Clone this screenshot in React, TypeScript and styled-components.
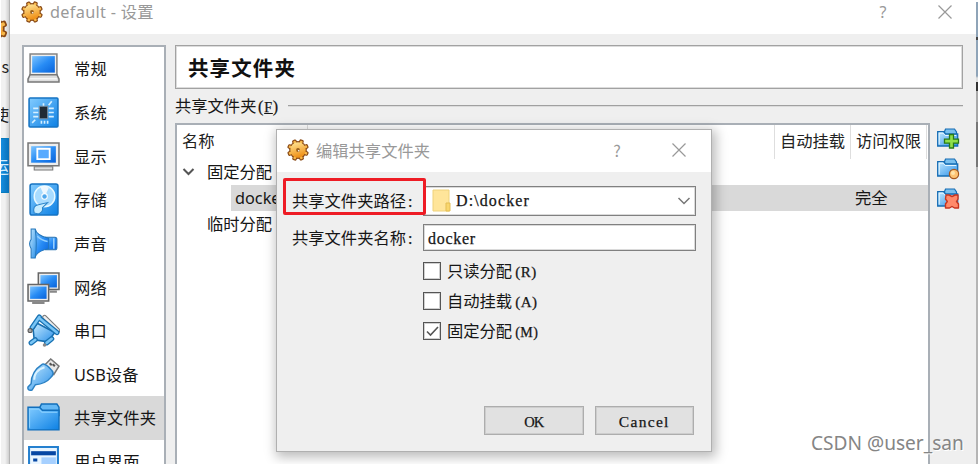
import React from 'react';
import styled, { createGlobalStyle } from 'styled-components';

const Global = createGlobalStyle`
  * { box-sizing: border-box; }
  body { margin: 0; overflow: hidden; background: #fff; }
  svg { flex: none; }
`;
const ui = `'Noto Sans', 'Noto Sans CJK SC', sans-serif`;
const cjk = `'Noto Sans CJK SC', sans-serif`;

const Screen = styled.div`
  position: relative; display: flex; width: 978px; height: 464px; overflow: hidden;
  font: 16.3px/24px ${ui}; color: #161616; white-space: nowrap;
`;
const BackWindow = styled.div`
  width: 9px; height: 464px; flex: none; overflow: hidden; padding-top: 2px;
  background: linear-gradient(90deg, #f1f1f1 50%, #cfcfcf); border-left: 1px solid #fff;
  display: flex; flex-direction: column; font-family: ${cjk};
`;
const BackCut = styled.div<{ h: number; blue?: boolean }>`
  height: ${p => p.h}px; flex: none; overflow: hidden; display: flex; align-items: center;
  justify-content: flex-end;
  color: ${p => (p.blue ? '#d9efff' : '#222')};
  background: ${p => (p.blue ? 'linear-gradient(90deg,#168ee0,#0870b8)' : 'transparent')};
  border: solid #087bbd; border-width: ${p => (p.blue ? '1px 0' : '0')};
`;
const Window = styled.div`
  width: 967px; height: 464px; flex: none; display: flex; flex-direction: column;
  background: #efefef; border-left: 1px solid #b4b4b4;
`;
const TitleBar = styled.div`
  height: 34px; flex: none; background: #fff; display: flex; align-items: center;
  padding: 0 23px 10px 10px; color: #999;
`;
const TitleText = styled.div<{ space?: number }>`
  flex: 1; margin-left: 6px; color: #999; letter-spacing: ${p => p.space ?? 0}px;
`;
const HelpMark = styled.div`
  width: 10px; text-align: center; margin-right: 49px; font-size: 16px; color: #999;
`;
const Body = styled.div`flex: 1; min-height: 0; display: flex; padding: 11px 0 0 12px;`;
const Sidebar = styled.div`
  width: 144px; height: 440px; flex: none; background: #fff;
  border: 2px solid #a9afb6; border-width: 2px 2px 0 2px;
`;
const NavItem = styled.div<{ active?: boolean }>`
  height: 43.65px; display: flex; align-items: center; padding-left: 3px; gap: 14px;
  background: ${p => (p.active ? '#d9d9d9' : 'transparent')};
`;
const NavLabel = styled.span`padding-top: 1px; letter-spacing: .15px;`;
const Content = styled.div`width: 788px; margin-left: 9px; flex: none; display: flex; flex-direction: column;`;
const Heading = styled.div`
  height: 44px; flex: none; border: 1px solid #a2a2a2; box-shadow: inset 0 0 0 1px #dcdcdc;
  background: #fff; padding-left: 12px;
  font: 700 20.5px/43px ${cjk}; letter-spacing: 1.1px; color: #111;
`;
const GroupTitle = styled.div`
  height: 34px; flex: none; display: flex; align-items: center; font-family: ${cjk}; gap: 9px; padding-top: 1px;
  &::after { content: ''; flex: 1; height: 1px; margin-bottom: 3px; background: #a0a0a0; box-shadow: 0 1px #dcdcdc; }
`;
const Latin = styled.span<{ space?: number; size?: number; lead?: number; underline?: boolean }>`
  font-family: 'Liberation Serif', serif; font-size: ${p => p.size ?? 16}px; letter-spacing: ${p => p.space ?? 0.9}px;
  margin-left: ${p => p.lead ?? 0}px;
  text-decoration: ${p => (p.underline ? 'underline' : 'none')}; -webkit-text-stroke: 0.25px;
`;
const TreeArea = styled.div`display: flex; height: 350px; flex: none;`;
const Tree = styled.div`width: 755px; height: 350px; background: #fff; border: 2px solid #a9afb6;`;
const TreeHead = styled.div`
  display: grid; grid-template-columns: 131px 467px 76px 76px; height: 34px; align-items: stretch;
`;
const HeadCell = styled.div`
  border-right: 1px solid #dedede; padding-left: 5px; line-height: 33px; color: #222;
`;
const TreeRow = styled.div<{ h: number; pad: number }>`
  height: ${p => p.h}px; display: flex; align-items: center; padding-left: ${p => p.pad}px;
`;
const SelectedRow = styled.div`
  height: 26px; margin-left: 54px; padding-left: 4px; background: #d9d9d9; display: grid;
  grid-template-columns: 620px 1fr; align-items: center;
`;
const Tools = styled.div`display: flex; flex-direction: column; gap: 6px; padding: 4px 0 0 6px;`;

const Dialog = styled.div`
  position: absolute; left: 276px; top: 129px; width: 436px; height: 323px;
  background: #efefef; border: 1px solid #b0b0b0; display: flex; flex-direction: column;
  box-shadow: 2px 3px 11px 2px rgba(0,0,0,.27); font-family: ${cjk};
`;
const DialogTitle = styled.div`
  height: 42px; flex: none; background: #fff; display: flex; align-items: center; padding: 0 24px 3px 9px;
`;
const Form = styled.div`padding: 14px 15px 0 15px; display: flex; flex-direction: column;`;
const Field = styled.div<{ h: number; gap: number }>`
  display: grid; grid-template-columns: 131px 273px; height: ${p => p.h}px; margin-bottom: ${p => p.gap}px;
  align-items: center;
`;
const Combo = styled.div`
  height: 30px; background: #fff; border: 1px solid #808080; box-shadow: inset 0 0 0 1px #dadada;
  display: flex; align-items: center; padding: 0 4px 0 8px; gap: 5px;
`;
const ComboText = styled.div`flex: 1; display: flex; align-items: center;`;
const Input = styled.div`
  height: 27px; background: #fff; border: 1px solid #808080; box-shadow: inset 0 0 0 1px #dadada;
  padding-left: 4px; line-height: 25px;
`;
const CheckRow = styled.div`
  height: 30px; padding-left: 131px; display: flex; align-items: center; gap: 6px;
`;
const CheckBox = styled.div`
  width: 18px; height: 18px; border: 1px solid #555; box-shadow: inset 0 0 0 1px #d0d0d0; background: #fff;
  display: flex; align-items: center; justify-content: center;
`;
const Buttons = styled.div`margin-top: auto; padding: 0 17px 16px 0; display: flex; justify-content: flex-end; gap: 11px;`;
const Button = styled.div`
  width: 99.5px; height: 29px; background: #e1e1e1; border: 1px solid #adadad;
  box-shadow: inset 0 0 0 1px #cdcdcd; text-align: center; line-height: 26px;
`;
const Highlight = styled.div`
  position: absolute; left: 283px; top: 178px; width: 143px; height: 37px; border: 3.5px solid #ee1c25; border-radius: 2px;
`;
const Watermark = styled.div`
  position: absolute; left: 811px; top: 430px; font: 19.1px/26px 'Noto Sans', sans-serif; color: #858585;
  text-shadow: 1px 1px 0 #fff;
`;
const EdgeStrip = styled.div`
  flex: 1; margin-top: 2px;
  background: linear-gradient(#8fa4b8 0 35px, #444 35px 38px, #8fa4b8 38px 74px, #ddd 76px 80px, #333 80px 89px, #aaa 89px 120px, #777 120px 165px, #b5b5b5 165px);
`;

const Defs = () => (
  <svg width="0" height="0" display="block">
    <defs>
      <linearGradient id="screen" x2="1" y2="1"><stop stopColor="#7cc4ff" /><stop offset=".5" stopColor="#288cf5" /><stop offset="1" stopColor="#0862da" /></linearGradient>
      <linearGradient id="pale" x2="1" y2="1"><stop stopColor="#c4eaff" /><stop offset="1" stopColor="#2a8fe8" /></linearGradient>
      <linearGradient id="folder" x2="1" y2="1"><stop stopColor="#83ccff" /><stop offset="1" stopColor="#0c80e4" /></linearGradient>
      <linearGradient id="gold" x2=".3" y2="1"><stop stopColor="#ffe99c" /><stop offset="1" stopColor="#f0921a" /></linearGradient>
    </defs>
  </svg>
);

const Gear = ({ size = 24 }: { size?: number }) => {
  const teeth = [22, 67, 112, 157, 202, 247, 292, 337];
  return (
    <svg width={size} height={size} viewBox="0 0 24 24">
      {teeth.map(a => <rect key={a} x="9.700" y="1" width="4.600" height="7" rx="1.500" fill="#8a4a16" transform={`rotate(${a} 12 12)`} />)}
      <circle cx="12" cy="12" r="8.900" fill="#8a4a16" />
      {teeth.map(a => <rect key={a} x="10.700" y="2.200" width="2.600" height="7" rx=".8" fill="#f8b94b" transform={`rotate(${a} 12 12)`} />)}
      <circle cx="12" cy="12" r="7.700" fill="url(#gold)" />
      <circle cx="12" cy="12" r="1.900" fill="#98601e" /><circle cx="12.700" cy="12.700" r=".8" fill="#fff" />
    </svg>
  );
};

const Cross = () => (
  <svg width="16" height="16" viewBox="0 0 16 16"><path d="M1.5 1.5l13 13m0-13l-13 13" stroke="#999" strokeWidth="1.2" /></svg>
);

const glyphs: Record<string, React.ReactNode> = {
  general: <><path d="M3 2h26v20H3z" fill="#eee" stroke="#858585" strokeWidth="1.5" /><path d="M5 4h22v16H5z" fill="url(#screen)" /><path d="M3 22h26l2 4v3H1v-3z" fill="#ddd" stroke="#777" strokeWidth="1.5" /><path d="M3 26h26" stroke="#fff" /></>,
  system: <><rect x="2" y="2" width="28" height="28" rx="1" fill="url(#folder)" stroke="#1674c3" strokeWidth="1.5" /><path d="M6 12h5m-5 4h5m-5 4h5m10-8h5m-5 4h5m-5 4h5M14 24v3m3-3v3m3-3v3m-4-20v3m5-1l3-4m-16 18l-3 3" stroke="#d5efff" strokeWidth="1.6" /><path d="M12 10h8v12h-8z" fill="#202b36" stroke="#73889b" /></>,
  display: <><path d="M1 3h30v22H1z" fill="#eee" stroke="#777" strokeWidth="1.5" /><path d="M4 6h24v16H4z" fill="url(#screen)" /><path d="M10 8.5h12v10H10z" fill="#57aaff" stroke="#fff" strokeWidth="1.8" /><path d="M7 26h18v3H7z" fill="#ddd" stroke="#777" /></>,
  storage: <><rect x="3" y="1" width="27" height="30" rx="2" fill="url(#folder)" stroke="#1674c3" strokeWidth="1.5" /><circle cx="17" cy="13" r="10" fill="#a9dcff" stroke="#eafaff" strokeWidth="1.4" /><path d="M17 13L13 4q6-2 8 1z" fill="#fff" opacity=".8" /><circle cx="17" cy="13" r="2.7" fill="#4fa8ed" stroke="#fff" /><path d="M7 29q-2-7 4-8l9-2-5 5q1 4-4 6z" fill="#c8edff" stroke="#2a83c9" /></>,
  audio: <><path d="M18 10h9q2 0 2 2v8q0 2-2 2h-9z" fill="url(#screen)" stroke="#3277b3" /><path d="M26 11v10" stroke="#9bd3ff" strokeWidth="1.500" /><path d="M8 2q1 6 13 9v10Q10 23 8 29z" fill="url(#screen)" stroke="#2476ba" /><path d="M4 2h4q2 14 0 28H4V21q-3-5 0-9z" fill="url(#pale)" stroke="#2678bc" /><path d="M10 9q4 4 10 5" stroke="#91d0ff" strokeWidth="1.500" fill="none" /></>,
  network: <><path d="M11 2h20v16H11z" fill="#eee" stroke="#666" strokeWidth="1.5" /><path d="M13 4h16v12H13z" fill="url(#screen)" /><path d="M1 13h20v16H1z" fill="#eee" stroke="#666" strokeWidth="1.5" /><path d="M3 15h16v12H3z" fill="url(#screen)" /><path d="M5 31h12M22 20h7" stroke="#888" strokeWidth="2" /></>,
  serial: <><path d="M17 3l13 13" stroke="#777" strokeWidth="4.500" strokeLinecap="round" /><path d="M17 3l13 13" stroke="#eee" strokeWidth="2.500" strokeLinecap="round" /><path d="M10 9L27 18l-7 9-13-2-1-10z" fill="url(#pale)" stroke="#176eae" strokeWidth="1.5" /><path d="M12 3L5 13m7-9L29 18M4 28l4-3m11 3l5-4" stroke="#1872b3" strokeWidth="5" strokeLinecap="round" /><path d="M12 3L5 13m7-9L29 18M4 28l4-3m11 3l5-4" stroke="#79c5f5" strokeWidth="2.5" strokeLinecap="round" /><circle cx="3" cy="16" r="2" fill="#aaa" stroke="#555" /><circle cx="17" cy="30" r="1.700" fill="#888" /></>,
  usb: <><path d="M17 7l6-6 8 7-5 8z" fill="#e8e8e8" stroke="#777" strokeWidth="1.5" /><path d="M22 5l2 2m1-1l2 2" stroke="#555" strokeWidth="2" /><path d="M15 6q3-1 9 6 3 3-1 7-5 6-15 7l-3 5q-5 1-4-3l3-3Q4 13 15 6z" fill="url(#pale)" stroke="#2a80c3" strokeWidth="1.4" /><path d="M7 21q0-9 10-12" stroke="#d9f2ff" strokeWidth="2" fill="none" /></>,
  folder: <><path d="M12 7l2-4h15l2 3v8H12z" fill="#64b8f5" stroke="#126fba" strokeWidth="1.4" /><path d="M1 6h11l3 3h16v19H1z" fill="url(#folder)" stroke="#116fbd" strokeWidth="1.4" /><path d="M2.5 26V8h9l3 3h15" stroke="#8dd2ff" fill="none" /></>,
  interface: <><path d="M2 2h28v31H2z" fill="#e9f5ff" stroke="#2480cf" strokeWidth="2" /><path d="M4 6h24v4H4z" fill="#0647a4" /><path d="M6 13h4v3H6zm0 6h4v3H6z" fill="#0647a4" /><path d="M14 12h14v15H14z" fill="#a6d0ff" /></>,
};
const NavIcon = ({ name }: { name: string }) => <svg width="33" height="33" viewBox="0 0 32 32">{glyphs[name]}</svg>;

const FolderTool = ({ kind }: { kind: 'add' | 'edit' | 'remove' }) => (
  <svg width="24" height="24" viewBox="0 0 24 24">
    <path d="M8 6l1.500-4h9l2 3v6H8z" fill="#79c0ef" stroke="#176db4" strokeWidth="1.200" />
    <path d="M1.700 4.700h6l2 2.300h12v12h-20z" fill="url(#pale)" stroke="#176db4" strokeWidth="1.300" />
    <path d="M3.200 17.500V6.200h4l2 2.300h11" stroke="#e4f6ff" strokeWidth="1" fill="none" />
    {kind === 'add' && <path d="M13.500 7.500h4v4.700h5v4h-5V21h-4v-4.800h-5v-4h5z" fill="#8fe04a" stroke="#287b16" strokeWidth="1.300" />}
    {kind === 'edit' && <><circle cx="18" cy="17" r="4.600" fill="#ffc474" stroke="#a6571c" strokeWidth="1.200" /><circle cx="17" cy="16" r="2" fill="#ffe4aa" /></>}
    {kind === 'remove' && <path d="M10 8h3l3 1.500L19 8h3v4l-1.500 2.500L22.500 17v4h-4L16 19.500 13.500 21h-4v-4l1.800-2.500L9.500 12z" fill="#ff8a6b" stroke="#c83620" strokeWidth="1.400" strokeLinejoin="round" />}
  </svg>
);

const nav = [
  ['general', '常规'], ['system', '系统'], ['display', '显示'], ['storage', '存储'], ['audio', '声音'],
  ['network', '网络'], ['serial', '串口'], ['usb', 'USB设备'], ['folder', '共享文件夹'], ['interface', '用户界面'],
];
const checks = [
  { label: '只读分配', key: '(R)', on: false }, { label: '自动挂载', key: '(A)', on: false }, { label: '固定分配', key: '(M)', on: true },
];

export default function App() {
  return (
    <>
      <Global />
      <Defs />
      <Screen>
        <BackWindow>
          <BackCut h={54}><Gear size={34} /></BackCut>
          <BackCut h={20}>(s</BackCut>
          <BackCut h={26} />
          <BackCut h={24}>使</BackCut>
          <BackCut h={12} />
          <BackCut h={55} blue>运</BackCut>
        </BackWindow>
        <Window>
          <TitleBar>
            <Gear />
            <TitleText space={0.3}>default - 设置</TitleText>
            <HelpMark>?</HelpMark>
            <Cross />
          </TitleBar>
          <Body>
            <Sidebar>
              {nav.map(([icon, label]) => (
                <NavItem key={icon} active={icon === 'folder'}><NavIcon name={icon} /><NavLabel>{label}</NavLabel></NavItem>
              ))}
            </Sidebar>
            <Content>
              <Heading>共享文件夹</Heading>
              <GroupTitle><span>共享文件夹<Latin lead={1.5}>(<Latin underline size={14}>F</Latin>)</Latin></span></GroupTitle>
              <TreeArea>
                <Tree>
                  <TreeHead>
                    <HeadCell>名称</HeadCell><HeadCell /><HeadCell>自动挂载</HeadCell><HeadCell>访问权限</HeadCell>
                  </TreeHead>
                  <TreeRow h={26} pad={5}>
                    <svg width="25" height="14" viewBox="0 0 25 14"><path d="M1.500 4l5 5 5-5" fill="none" stroke="#555" strokeWidth="2" /></svg>
                    固定分配
                  </TreeRow>
                  <SelectedRow><span>docker</span><span>完全</span></SelectedRow>
                  <TreeRow h={26} pad={30}>临时分配</TreeRow>
                </Tree>
                <Tools><FolderTool kind="add" /><FolderTool kind="edit" /><FolderTool kind="remove" /></Tools>
              </TreeArea>
            </Content>
          </Body>
        </Window>
        <EdgeStrip />
        <Dialog>
          <DialogTitle>
            <Gear /><TitleText>编辑共享文件夹</TitleText><HelpMark>?</HelpMark><Cross />
          </DialogTitle>
          <Form>
            <Field h={30} gap={8}>
              <span>共享文件夹路径<Latin lead={2}>:</Latin></span>
              <Combo>
                <svg width="19" height="24" viewBox="0 0 19 24"><path d="M1 1h16v21H1z" fill="#ffe59a" stroke="#efd27b" /><path d="M14 14h4v8h-4z" fill="#f9d66d" stroke="#e3bd54" /></svg>
                <ComboText><Latin space={1.1}>D:\docker</Latin></ComboText>
                <svg width="14" height="10" viewBox="0 0 14 10"><path d="M1.500 2l5.500 5.500L12.500 2" fill="none" stroke="#777" strokeWidth="1.500" /></svg>
              </Combo>
            </Field>
            <Field h={27} gap={5}>
              <span>共享文件夹名称<Latin lead={2}>:</Latin></span>
              <Input><Latin space={0.7}>docker</Latin></Input>
            </Field>
            {checks.map(c => (
              <CheckRow key={c.key}>
                <CheckBox>{c.on && <svg width="15" height="15" viewBox="0 0 15 15"><path d="M2 7.500l3.500 3.500L13 3" fill="none" stroke="#555" strokeWidth="1.600" /></svg>}</CheckBox>
                <span>{c.label}<Latin lead={3} size={c.key === '(M)' ? 14 : 15} space={0.5}>{c.key}</Latin></span>
              </CheckRow>
            ))}
          </Form>
          <Buttons>
            <Button><Latin size={14.5} space={-1}>OK</Latin></Button>
            <Button><Latin size={15.5} space={1.3}>Cancel</Latin></Button>
          </Buttons>
        </Dialog>
        <Highlight />
        <Watermark>CSDN @user_san</Watermark>
      </Screen>
    </>
  );
}
